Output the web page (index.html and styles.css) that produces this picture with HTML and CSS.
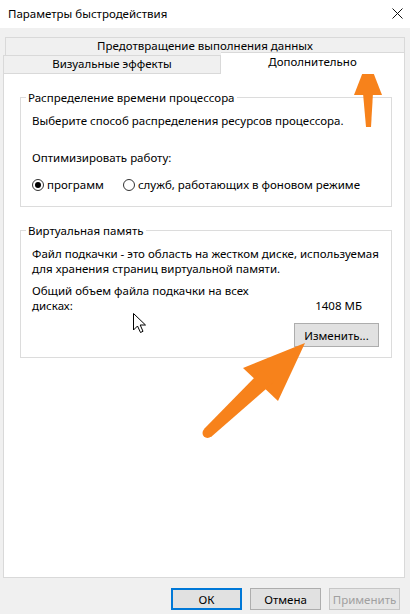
FILE: index.html
```html
<!DOCTYPE html>
<html lang="ru">
<head>
  <meta charset="UTF-8">
  <title>Параметры быстродействия</title>
  <link rel="stylesheet" href="styles.css">
</head>
<body>
  <div class="window">
    <!-- Title bar -->
    <div class="titlebar">
      <span class="title">Параметры быстродействия</span>
      <svg class="close" width="11" height="11" viewBox="0 0 11 11">
        <path d="M0.5 0.5 L10.5 10.5 M10.5 0.5 L0.5 10.5" stroke="#111" stroke-width="1" fill="none"/>
      </svg>
    </div>

    <div class="body">
      <!-- Tabs -->
      <div class="tabs">
        <div class="tab-row top-row">
          <div class="tab wide">Предотвращение выполнения данных</div>
        </div>
        <div class="tab-row">
          <div class="tab">Визуальные эффекты</div>
          <div class="tab selected">Дополнительно</div>
        </div>
      </div>

      <!-- Tab page -->
      <div class="panel">
        <fieldset class="group">
          <legend>Распределение времени процессора</legend>
          <p class="line first">Выберите способ распределения ресурсов процессора.</p>
          <p class="line optimize">Оптимизировать работу:</p>
          <div class="radios">
            <label class="radio"><span class="dot checked"></span>программ</label>
            <label class="radio"><span class="dot"></span>служб, работающих в фоновом режиме</label>
          </div>
        </fieldset>

        <fieldset class="group memory">
          <legend>Виртуальная память</legend>
          <p class="line first">Файл подкачки - это область на жестком диске, используемая<br>для хранения страниц виртуальной памяти.</p>
          <div class="total">
            <p class="line">Общий объем файла подкачки на всех<br>дисках:</p>
            <span class="size">1408 МБ</span>
          </div>
          <div class="change-row">
            <button class="btn change">Изменить...</button>
          </div>
        </fieldset>
      </div>

      <!-- Dialog buttons -->
      <div class="buttons">
        <button class="btn default">ОК</button>
        <button class="btn">Отмена</button>
        <button class="btn" disabled>Применить</button>
      </div>
    </div>

    <!-- Annotation arrows and mouse pointer over the dialog -->
    <svg class="overlay" width="410" height="614" viewBox="0 0 410 614">
      <g fill="#f7821b">
        <polygon points="368,59 382,95 354,95"/>
        <polygon points="363,93 373,93 371,127 366,127"/>
        <polygon points="305,343 278,401 243,368"/>
        <polygon points="274,382 262,370 204,429 211,437"/>
        <circle cx="207.5" cy="433" r="5"/>
      </g>
      <path class="cursor" d="M133.5 313.5 L133.5 330 L137.5 326 L140.5 332.5 L143 331.3 L140.2 325 L145.5 325 Z" fill="#fff" stroke="#000" stroke-width="1"/>
    </svg>
  </div>
</body>
</html>
```

FILE: styles.css
```css
/* Dialog window */
body {
  margin: 0;
  font-family: "Noto Sans", "Liberation Sans", sans-serif;
  font-size: 11.5px;
  color: #000;
  background: #f0f0f0;
}

.window {
  position: relative;
  width: 410px;
  height: 614px;
  background: #f0f0f0;
  overflow: hidden;
}

.titlebar {
  height: 28px;
  background: #fff;
  display: flex;
  align-items: center;
  justify-content: space-between;
  padding: 0 7px 2px 8px;
  box-sizing: border-box;
}

.title {
  font-size: 11.5px;
}

.body {
  padding: 9px 5px 0 3px;
}

/* Tabs */
.tabs {
  display: flex;
  flex-direction: column;
}

.tab-row {
  display: flex;
  height: 18px;
}

.top-row {
  padding-left: 2px;
}

.tab {
  box-sizing: border-box;
  border: 1px solid #d9d9d9;
  border-bottom: none;
  background: #f0f0f0;
  text-align: center;
  line-height: 16px;
  width: 218px;
  white-space: nowrap;
}

.tab.wide {
  flex: 1;
}

.tab.selected {
  flex: 1;
  background: #fff;
  margin-top: -3px;
  height: 22px;
  line-height: 18px;
  border-left: none;
  position: relative;
  z-index: 1;
}

/* Tab page */
.panel {
  box-sizing: border-box;
  height: 505px;
  background: #fff;
  border: 1px solid #d9d9d9;
  padding: 16px 12px 0 16px;
}

.group {
  margin: 0;
  border: 1px solid #dcdcdc;
  padding: 0 10px 14px 11px;
}

.group legend {
  padding: 0 2px;
  margin-left: -6px;
  line-height: 15px;
}

.line {
  margin: 0;
  line-height: 15px;
  white-space: nowrap;
}

.line.first {
  margin-top: 8px;
}

.line.optimize {
  margin-top: 22px;
}

.radios {
  display: flex;
  gap: 19px;
  margin-top: 12px;
  line-height: 15px;
  white-space: nowrap;
}

.radio {
  display: flex;
  align-items: center;
  gap: 3px;
}

.dot {
  box-sizing: border-box;
  width: 12px;
  height: 12px;
  border: 1px solid #333;
  border-radius: 50%;
  display: inline-block;
  position: relative;
}

.dot.checked::after {
  content: "";
  position: absolute;
  left: 2px;
  top: 2px;
  width: 6px;
  height: 6px;
  border-radius: 50%;
  background: #000;
}

.memory {
  margin-top: 16px;
  padding-bottom: 10px;
}

.total {
  display: flex;
  justify-content: space-between;
  align-items: flex-end;
  margin-top: 7px;
  padding-right: 19px;
}

.change-row {
  display: flex;
  justify-content: flex-end;
  margin-top: 10px;
  padding-right: 2px;
}

/* Buttons */
.btn {
  box-sizing: border-box;
  font-family: inherit;
  font-size: 11.5px;
  color: #000;
  background: #e1e1e1;
  border: 1px solid #adadad;
  border-radius: 0;
  height: 23px;
  padding: 0;
}

.btn.change {
  width: 85px;
  height: 24px;
}

.buttons {
  display: flex;
  justify-content: flex-end;
  gap: 8px;
  padding: 10px 5px 0 0;
}

.buttons .btn {
  width: 71px;
  height: 22px;
}

.btn.default {
  border: 2px solid #0078d7;
}

.btn:disabled {
  color: #a0a0a0;
  background: #e6e6e6;
  border-color: #c6c6c6;
}

/* Annotation layer */
.overlay {
  position: absolute;
  left: 0;
  top: 0;
  pointer-events: none;
}
```
